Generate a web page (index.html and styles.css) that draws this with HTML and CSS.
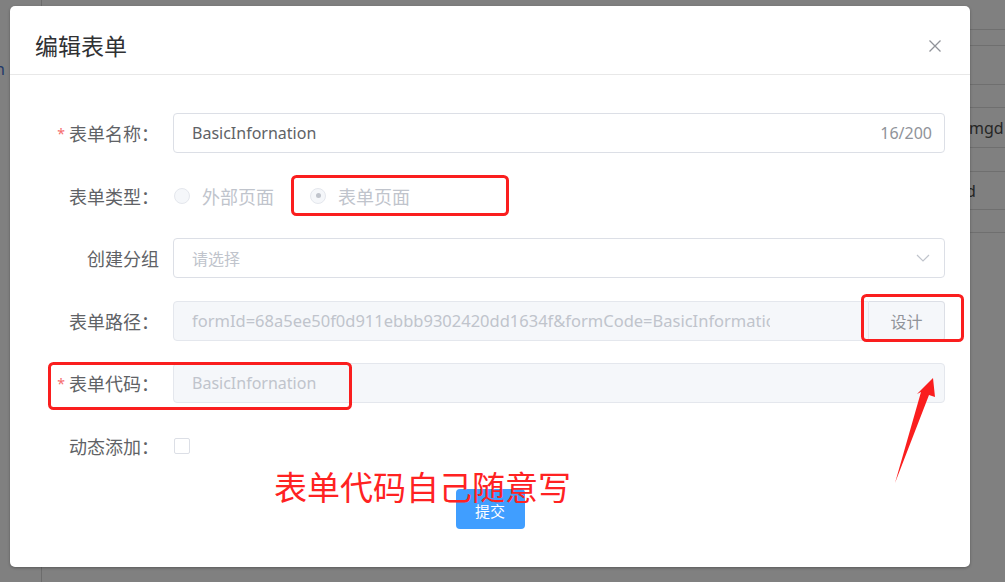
FILE: index.html
```html
<!DOCTYPE html>
<html lang="zh-CN">
<head>
<meta charset="utf-8">
<title>编辑表单</title>
<link rel="stylesheet" href="styles.css">
</head>
<body>
<div class="page">
  <aside class="aside"><span class="aside-link">n</span></aside>
  <main class="main">
    <div class="tbl">
      <div class="tr r16"></div>
      <div class="tr r39"></div>
      <div class="tr r23"></div>
      <div class="tr r40"><span class="cell cell-a">mgd</span></div>
      <div class="tr r24"></div>
      <div class="tr r38"><span class="cell cell-b">d</span></div>
      <div class="tr r23"></div>
      <div class="tr r1"></div>
    </div>
  </main>
</div>

<div class="mask">
  <div class="dialog">
    <div class="dialog-header">
      <span class="dialog-title">编辑表单</span>
      <button class="close" aria-label="close">
        <svg width="12" height="12" viewBox="0 0 12 12"><path d="M0.5 0.5 L11.5 11.5 M11.5 0.5 L0.5 11.5" stroke="#909399" stroke-width="1.3" fill="none"/></svg>
      </button>
    </div>
    <div class="dialog-body">
      <div class="form">
        <div class="form-item">
          <label class="label required">表单名称：</label>
          <div class="content">
            <div class="input">
              <span class="input-text">BasicInfornation</span>
              <span class="count">16/200</span>
            </div>
          </div>
        </div>
        <div class="form-item">
          <label class="label">表单类型：</label>
          <div class="content radios">
            <span class="radio"><span class="radio-inner"></span><span class="radio-label">外部页面</span></span>
            <span class="radio checked"><span class="radio-inner"></span><span class="radio-label">表单页面</span></span>
          </div>
        </div>
        <div class="form-item">
          <label class="label">创建分组</label>
          <div class="content">
            <div class="input select">
              <span class="input-text placeholder">请选择</span>
              <svg class="chev" width="14" height="8" viewBox="0 0 14 8"><path d="M1 1 L7 7 L13 1" stroke="#c0c4cc" stroke-width="1.2" fill="none"/></svg>
            </div>
          </div>
        </div>
        <div class="form-item">
          <label class="label">表单路径：</label>
          <div class="content group">
            <div class="input disabled path">
              <span class="input-text">formId=68a5ee50f0d911ebbb9302420dd1634f&amp;formCode=BasicInformation</span>
            </div>
            <div class="append">设计</div>
          </div>
        </div>
        <div class="form-item">
          <label class="label required">表单代码：</label>
          <div class="content">
            <div class="input disabled">
              <span class="input-text">BasicInfornation</span>
            </div>
          </div>
        </div>
        <div class="form-item">
          <label class="label">动态添加：</label>
          <div class="content">
            <span class="checkbox"></span>
          </div>
        </div>
      </div>
      <div class="footer">
        <button class="btn-primary">提交</button>
      </div>
    </div>

    <svg class="marks" width="960" height="561" viewBox="10 6 960 561">
      <rect x="292.5" y="176.5" width="215" height="38" rx="4" fill="none" stroke="#fa1e1e" stroke-width="3"/>
      <rect x="862.5" y="295.5" width="100" height="45" rx="4" fill="none" stroke="#fa1e1e" stroke-width="3"/>
      <rect x="49.5" y="363.5" width="301" height="45" rx="4" fill="none" stroke="#fa1e1e" stroke-width="3"/>
      <polygon points="895,483 921,392 917,394 933,378 935,397 929,395" fill="#fa1e1e"/>
    </svg>
    <div class="note">表单代码自己随意写</div>
  </div>
</div>
</body>
</html>
```

FILE: styles.css
```css
* { box-sizing: border-box; }
html, body { margin: 0; padding: 0; }
body {
  width: 1005px;
  height: 582px;
  overflow: hidden;
  background: #808080;
  font-family: "Noto Sans", "Noto Sans CJK SC", sans-serif;
  position: relative;
}

/* background page (dimmed) */
.page {
  display: flex;
  height: 582px;
}
.aside {
  width: 42px;
  flex: none;
  border-right: 1px solid #6c6c6c;
  padding-top: 58px;
  overflow: hidden;
}
.aside-link {
  display: block;
  margin-left: -5px;
  font-size: 16px;
  color: #22386a;
}
.main { flex: 1; overflow: hidden; }
.tbl { padding-top: 29px; }
.tr {
  border-top: 1px solid #6f6f6f;
  display: flex;
  align-items: center;
  white-space: nowrap;
}
.r16 { height: 16px; }
.r39 { height: 39px; }
.r23 { height: 23px; }
.r40 { height: 40px; }
.r24 { height: 24px; }
.r38 { height: 38px; }
.r1 { height: 1px; }
.cell { font-size: 16px; color: #262626; }
.cell-a { padding-left: 927px; }
.cell-b { padding-left: 924px; }

/* modal */
.mask {
  position: absolute;
  inset: 0;
  padding: 6px 35px 0 10px;
}
.dialog {
  position: relative;
  width: 960px;
  height: 561px;
  background: #fff;
  border-radius: 5px;
  box-shadow: 0 1px 3px rgba(0, 0, 0, .3);
}
.dialog-header {
  padding: 25px 20px 13px 25px;
  border-bottom: 1px solid #e8e8e8;
}
.dialog-title {
  display: block;
  font-size: 23px;
  line-height: 30px;
  color: #303133;
}
.close {
  position: absolute;
  top: 34px;
  right: 29px;
  width: 12px;
  height: 12px;
  padding: 0;
  border: 0;
  background: none;
  display: flex;
}

.dialog-body {
  padding: 38px 25px 38px 20px;
}
.form-item {
  display: flex;
  align-items: center;
  height: 40px;
  margin-bottom: 22.5px;
}
.form-item:last-child { margin-bottom: 23.5px; }
.label {
  width: 143px;
  flex: none;
  text-align: right;
  padding-right: 14px;
  font-size: 18px;
  color: #606266;
  white-space: nowrap;
}
.label.required::before {
  content: "*";
  color: #f56c6c;
  font-size: 14px;
  margin-right: 4px;
  vertical-align: 2px;
}
.content {
  flex: 1;
  display: flex;
  align-items: center;
  min-width: 0;
  height: 40px;
}
.input {
  flex: 1;
  min-width: 0;
  height: 40px;
  display: flex;
  align-items: center;
  border: 1px solid #dcdfe6;
  border-radius: 4px;
  padding: 0 12px 0 18px;
  background: #fff;
  font-size: 16px;
  color: #606266;
}
.input-text {
  flex: 1;
  min-width: 0;
  overflow: hidden;
  white-space: nowrap;
}
.placeholder { color: #c0c4cc; }
.count { color: #909399; font-size: 16px; }
.chev { flex: none; margin-right: 2px; }
.input.disabled {
  background: #f5f7fa;
  border-color: #e4e7ed;
  color: #c0c4cc;
}
.input.path {
  border-radius: 4px 0 0 4px;
  padding-right: 98px;
  font-size: 16.5px;
}
.append {
  flex: none;
  width: 76px;
  height: 40px;
  display: flex;
  align-items: center;
  justify-content: center;
  background: #f5f7fa;
  border: 1px solid #dcdfe6;
  border-left: 0;
  border-radius: 0 4px 4px 0;
  font-size: 16px;
  color: #909399;
}

/* radios */
.radio {
  display: flex;
  align-items: center;
  margin-right: 35px;
}
.radio-inner {
  width: 16px;
  height: 16px;
  border: 1px solid #e4e7ed;
  border-radius: 50%;
  background: #f5f7fa;
  margin-left: 1px;
  display: flex;
  align-items: center;
  justify-content: center;
}
.radio.checked .radio-inner::after {
  content: "";
  width: 5px;
  height: 5px;
  border-radius: 50%;
  background: #c0c4cc;
}
.radio-label {
  margin-left: 12px;
  font-size: 18px;
  color: #c0c4cc;
}

.checkbox {
  width: 16px;
  height: 16px;
  margin-left: 1px;
  border: 1px solid #dcdfe6;
  border-radius: 2px;
  background: #fff;
}

.footer {
  display: flex;
  justify-content: center;
  padding-left: 5px;
}
.btn-primary {
  width: 69px;
  height: 40px;
  border: 0;
  border-radius: 4px;
  background: #409eff;
  color: #fff;
  font-family: "Noto Sans", "Noto Sans CJK SC", sans-serif;
  font-size: 15px;
  padding: 2px 0 0;
}

/* annotations drawn over the dialog */
.marks {
  position: absolute;
  left: 0;
  top: 0;
  pointer-events: none;
}
.note {
  position: absolute;
  left: 264px;
  top: 462px;
  font-size: 33px;
  line-height: 40px;
  color: #ff2222;
  white-space: nowrap;
  pointer-events: none;
}
```
